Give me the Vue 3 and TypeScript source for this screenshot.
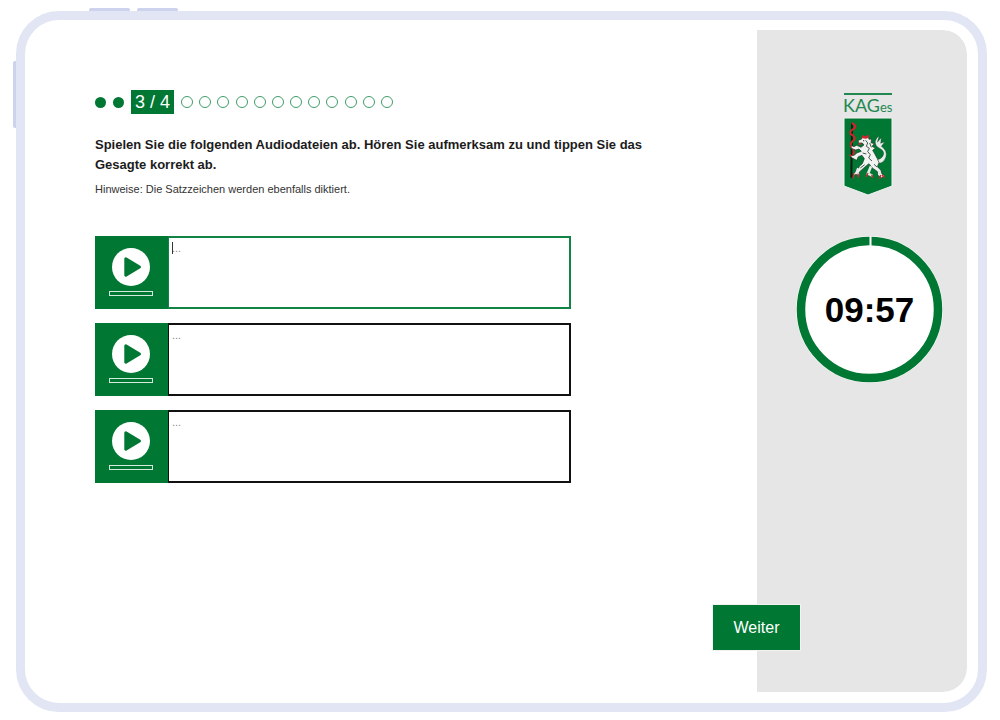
<script setup lang="ts">
import { ref } from 'vue'

interface Clip {
  id: number
  text: string
  active: boolean
}

const done = 2
const remaining = 12
const clips = ref<Clip[]>([
  { id: 1, text: '', active: true },
  { id: 2, text: '', active: false },
  { id: 3, text: '', active: false },
])
</script>

<template>
  <div class="page">
    <div class="device">
      <span class="key key-a"></span>
      <span class="key key-b"></span>
      <span class="key key-side"></span>

      <div class="screen">
        <main class="content">
          <div class="steps">
            <span v-for="n in done" :key="n" class="dot full"></span>
            <span class="current">3 / 4</span>
            <div class="open">
              <span v-for="n in remaining" :key="n" class="dot"></span>
            </div>
          </div>

          <h1>Spielen Sie die folgenden Audiodateien ab. Hören Sie aufmerksam zu und tippen Sie das Gesagte korrekt ab.</h1>
          <p class="hint">Hinweise: Die Satzzeichen werden ebenfalls diktiert.</p>

          <div class="clips">
            <div v-for="clip in clips" :key="clip.id" class="clip" :class="{ active: clip.active }">
              <button type="button" class="play" :aria-label="`Audio ${clip.id} abspielen`">
                <svg width="38" height="38" viewBox="0 0 38 38" aria-hidden="true">
                  <circle cx="19" cy="19" r="19" fill="#fff" />
                  <path d="M13.8 10.8 L27.5 19 L13.8 27.2 Z" fill="#007833" stroke="#007833" stroke-width="3" stroke-linejoin="round" />
                </svg>
                <span class="track"></span>
              </button>
              <textarea v-model="clip.text" placeholder="..." :aria-label="`Text zu Audio ${clip.id}`"></textarea>
              <span v-if="clip.active" class="caret"></span>
            </div>
          </div>
        </main>

        <aside class="side">
          <svg class="logo" width="50" height="104" viewBox="0 0 50 104" role="img" aria-label="KAGes">
            <rect x="1" y="0" width="48" height="2" fill="#23884f" />
            <text x="0" y="19" class="brand">KAG<tspan class="brand-small">es</tspan></text>
            <path d="M1 25 H49 V93 L25 102 L1 93 Z" fill="#007833" stroke="#f3f3f3" stroke-width="1" />
            <g transform="translate(-8 -8) scale(0.3333)">
              <path d="M51 114 L49 278" stroke="#121a14" stroke-width="6" fill="none" />
              <path d="M50 114 Q68 123 57 131 Q42 139 47 147 Q65 156 56 166 Q43 176 49 185 Q61 196 54 209" stroke="#d3222a" stroke-width="6" fill="none" />
              <path d="M116 221 Q135 228 144 213 Q151 200 136 191 Q119 183 121 169 Q122 160 132 153 L127 172 L139 158 L137 175 L149 171 L139 184 Q157 196 153 215 Q146 239 120 234 Z" fill="#e9eeea" stroke="#26342b" stroke-width="1" />
              <path d="M79 163 L84 151 L91 158 L99 151 L102 163 L110 162 L108 173 L118 176 L111 184 L121 190 L113 196 L119 206 L127 221 L132 233 L127 245 L137 255 L141 267 L149 273 L139 278 L129 271 L128 260 L112 249 L102 236 L94 242 L83 252 L73 261 L73 272 L62 268 L53 275 L57 263 L67 259 L73 244 L82 236 L88 221 L81 211 L70 215 L65 226 L52 219 L45 212 L58 211 L65 204 L79 199 L72 192 L62 195 L49 190 L47 181 L57 185 L65 181 L78 187 L87 180 L82 174 L70 174 L70 166 Z" fill="#f1f4f1" stroke="#26342b" stroke-width="2" />
              <path d="M92 166 L98 174 L94 184 L103 190 L98 200 L106 209 L101 219 L111 228 M104 174 L109 187 M76 249 L89 239 M83 204 L94 207 M117 238 L126 246" stroke="#47564c" stroke-width="3" fill="none" />
              <path d="M70 250 L64 266 M132 257 L134 270 M108 244 L99 266 L112 272" stroke="#e7ece8" stroke-width="8" fill="none" />
              <path d="M79 159 L83 151 L91 154 L100 149 L102 158 L92 161 Z M71 173 L82 177 L71 180 Z" fill="#cf2630" />
              <path d="M43 210 L51 213 M45 183 L50 187 M57 265 L55 280 M69 266 L70 278 M99 264 L93 276 M110 269 L113 279 M137 270 L134 282 M141 270 L149 278" stroke="#cf2630" stroke-width="4" fill="none" />
              <circle cx="86" cy="167" r="2" fill="#26342b" />
            </g>
          </svg>

          <div class="timer" role="timer">
            <svg width="147" height="147" viewBox="0 0 147 147" aria-hidden="true">
              <circle cx="73.5" cy="73.5" r="73.5" fill="#fff" opacity="0.7" />
              <circle cx="73.5" cy="73.5" r="68.5" fill="#fff" stroke="#007833" stroke-width="8.5" />
              <path d="M74.5 0 V11" stroke="#fff" stroke-width="2" />
            </svg>
            <span class="time">09:57</span>
          </div>
        </aside>

        <button type="button" class="next">Weiter</button>
      </div>
    </div>
  </div>
</template>

<style>
html,
body {
  background: #fff;
}
</style>

<style scoped>
.page {
  box-sizing: border-box;
  min-height: 100vh;
  padding: 11px 13px 8px 16px;
  display: flex;
  font-family: "Liberation Sans", Arial, sans-serif;
  color: #1c1c1c;
}

.device {
  position: relative;
  box-sizing: border-box;
  flex: 1;
  display: flex;
  padding: 10px 11px 11px;
  border: 9px solid #e1e5f4;
  border-radius: 43px;
}

.key {
  position: absolute;
  background: #cdd3ec;
}

.key-a,
.key-b {
  top: -12px;
  height: 3px;
  width: 41px;
  border-radius: 2px 2px 0 0;
}

.key-a {
  left: 64px;
}

.key-b {
  left: 112px;
}

.key-side {
  left: -12px;
  top: 41px;
  width: 3px;
  height: 67px;
  border-radius: 2px 0 0 2px;
}

.screen {
  position: relative;
  flex: 1;
  display: flex;
  border-radius: 24px;
  overflow: hidden;
}

.content {
  flex: 1;
  padding: 60px 100px 0 59px;
}

.steps {
  display: flex;
  align-items: center;
  gap: 7px;
}

.dot {
  box-sizing: border-box;
  width: 12px;
  height: 12px;
  border: 1px solid #3f9c69;
  border-radius: 50%;
}

.dot.full {
  width: 11px;
  height: 11px;
  border: 0;
  background: #007833;
}

.current {
  width: 43px;
  background: #007833;
  color: #fff;
  font-size: 18px;
  line-height: 24px;
  text-align: center;
  white-space: nowrap;
}

.open {
  display: flex;
  justify-content: space-between;
  width: 212px;
}

h1 {
  margin: 21px 0 0;
  font-size: 13px;
  line-height: 20px;
  font-weight: 700;
}

.hint {
  margin: 6px 0 0;
  font-size: 11px;
  line-height: 16px;
  color: #333;
}

.clips {
  display: flex;
  flex-direction: column;
  gap: 14px;
  margin-top: 39px;
}

.clip {
  position: relative;
  display: flex;
  max-width: 476px;
  height: 73px;
}

.play {
  width: 73px;
  padding: 0 2px 2px 0;
  border: 0;
  background: #007833;
  display: flex;
  flex-direction: column;
  align-items: center;
  justify-content: center;
  gap: 5px;
}

.play svg {
  display: block;
}

.track {
  box-sizing: border-box;
  width: 44px;
  height: 5px;
  border: 1px solid #d5e9dc;
}

textarea {
  box-sizing: border-box;
  flex: 1;
  min-width: 0;
  margin: 0;
  padding: 4px 3px;
  border: 2px solid #111;
  border-left-width: 1px;
  border-radius: 0;
  background: #fff;
  outline: none;
  resize: none;
  font-family: inherit;
  font-size: 11px;
  line-height: 12px;
  color: #333;
}

textarea::placeholder {
  color: #888;
  opacity: 1;
}

.active textarea {
  border-color: #118345;
}

.caret {
  position: absolute;
  left: 77px;
  top: 6px;
  width: 1px;
  height: 12px;
  background: #333;
}

.side {
  box-sizing: border-box;
  width: 210px;
  padding: 63px 0 0 15px;
  background: #e6e6e6;
  border-radius: 0 24px 24px 0;
  display: flex;
  flex-direction: column;
  align-items: center;
}

.logo {
  margin-right: 4px;
}

.brand {
  font-family: Lato, "Liberation Sans", sans-serif;
  font-weight: 400;
  font-size: 18px;
  fill: #23884f;
}

.brand-small {
  font-size: 13px;
}

.timer {
  display: grid;
  place-items: center;
  margin-top: 39px;
}

.timer svg,
.time {
  grid-area: 1 / 1;
}

.timer svg {
  display: block;
}

.time {
  font-size: 35px;
  line-height: 40px;
  font-weight: 700;
  color: #000;
}

.next {
  position: absolute;
  right: 167px;
  bottom: 42px;
  width: 87px;
  height: 45px;
  padding: 0;
  border: 0;
  background: #007833;
  box-shadow: 0 0 0 1px #f2f2f2;
  color: #fff;
  font-family: inherit;
  font-size: 16px;
}
</style>
